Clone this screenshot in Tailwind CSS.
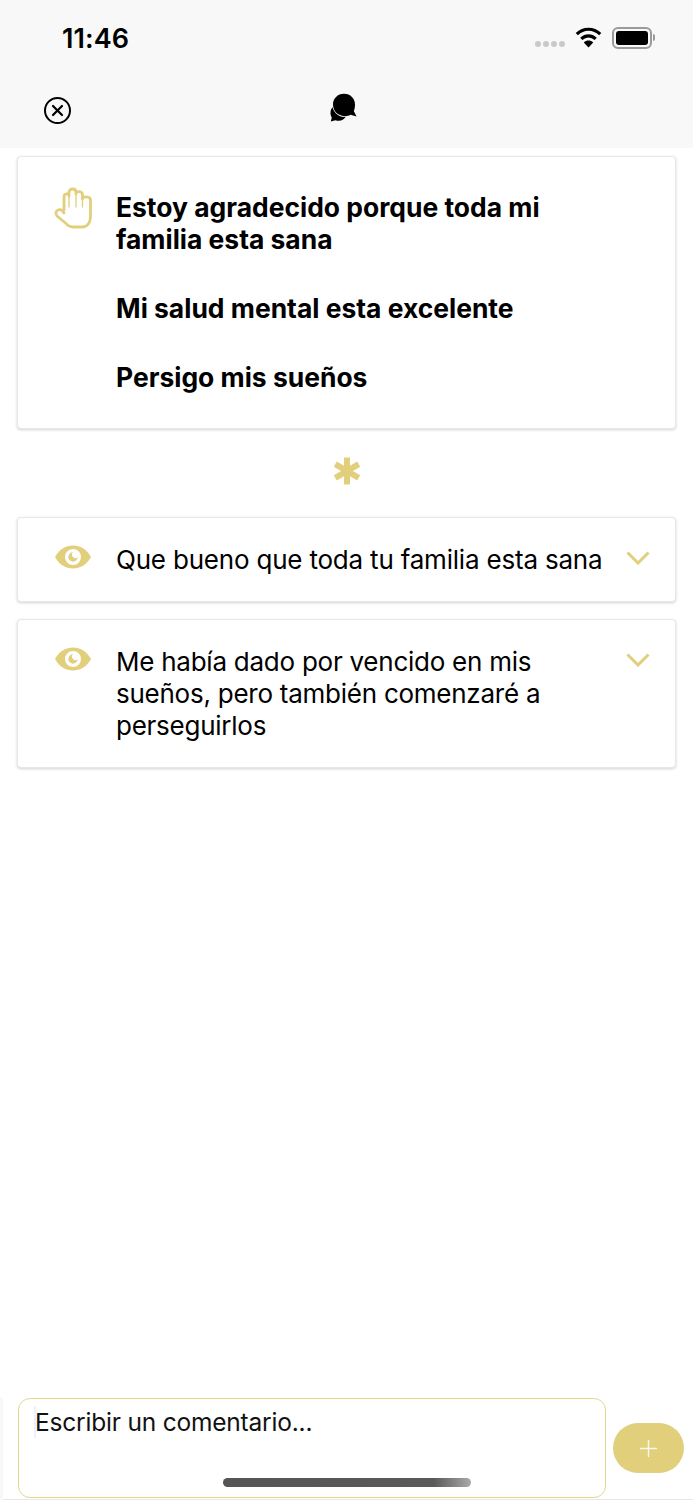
<!DOCTYPE html>
<html lang="es">
<head>
    <meta charset="UTF-8">
    <meta name="viewport" content="width=device-width, initial-scale=1.0">
    <title>Comentarios</title>
    <script src="https://cdn.jsdelivr.net/npm/@tailwindcss/browser@4"></script>
</head>
<body class="bg-white">
    <div class="relative w-[693px] h-[1500px] overflow-hidden flex flex-col font-['Inter',sans-serif] text-black">
        <!-- Header -->
        <header class="h-[148px] shrink-0 bg-[#f8f8f8] flex flex-col">
            <div class="h-[76px] pl-[62px] pr-[38px] flex items-center justify-between">
                <span class="text-[27px] font-semibold tracking-[0.1px] leading-none">11:46</span>
                <div class="flex items-center">
                    <div class="flex gap-[2px] mt-[12px] mr-[10px]">
                        <span class="w-[6px] h-[6px] rounded-full bg-[#c9c9c9]"></span>
                        <span class="w-[6px] h-[6px] rounded-full bg-[#c9c9c9]"></span>
                        <span class="w-[6px] h-[6px] rounded-full bg-[#c9c9c9]"></span>
                        <span class="w-[6px] h-[6px] rounded-full bg-[#c9c9c9]"></span>
                    </div>
                    <svg class="mr-[10px] -mt-[2px]" width="27" height="21" viewBox="0 0 27 21" fill="none">
                        <path d="M1.8 7.2C8.6 .6 18.4 .6 25.2 7.2" stroke="#000" stroke-width="3.2"/>
                        <path d="M6.3 11.8C10.6 7.8 16.400 7.8 20.7 11.8" stroke="#000" stroke-width="3.2"/>
                        <path d="M13.5 20.5L8.8 15.4C11.6 13 15.4 13 18.2 15.4Z" fill="#000"/>
                    </svg>
                    <div class="w-[40px] h-[22px] rounded-[6px] border-2 border-[#9a9a9a] p-[2px] -mt-[1px]">
                        <div class="w-full h-full rounded-[3px] bg-black"></div>
                    </div>
                    <span class="w-[2px] h-[7px] rounded-r-full bg-[#9a9a9a] ml-[1px] -mt-[1px]"></span>
                </div>
            </div>
            <div class="relative flex-1">
                <svg class="absolute left-[43px] top-[20px]" width="29" height="29" viewBox="0 0 29 29" fill="none" stroke="#000">
                    <circle cx="14.5" cy="14.5" r="12.5" stroke-width="2"/>
                    <path d="M10 10L19 19M19 10L10 19" stroke-width="2.2" stroke-linecap="round"/>
                </svg>
                <svg class="absolute left-[329px] top-[17px]" width="28" height="29" viewBox="0 0 28 29" fill="#000">
                    <path d="M9 12C4.500 12 1.500 15.500 1.500 20C1.500 21.800 2 23.300 2.800 24.500L1.800 28.500L6.500 27.300C11 28.800 15.500 27 17 23Z"/>
                    <path stroke="#f8f8f8" stroke-width="1.500" paint-order="stroke" d="M15 0.700C21.500 0.700 26 5.500 26 11.500C26 14.500 25.500 16.500 24.800 18L27.500 23.500L21.500 21.800C19.500 23 17.500 23.300 15.500 23.200C9 22.800 4 18 4 11.500C4 5.500 8.500 0.700 15 0.700Z"/>
                </svg>
            </div>
        </header>

        <!-- Content -->
        <main class="flex-1 px-[17px] pt-[8px] flex flex-col">
            <section class="h-[273px] bg-white rounded-[4px] border border-[#e8e8e8] shadow-[0_1px_3px_rgba(0,0,0,0.18)] pl-[36px] pr-[20px] pt-[30px] flex gap-[24px]">
                <svg class="shrink-0 w-[38px] h-[42px]" viewBox="0 0 38 42" fill="none" stroke="#e1cf7c" stroke-width="2.800" stroke-linecap="round" stroke-linejoin="round">
                    <path d="M10 23V10C10 6 15 6 15 9V5C15 1 22 1 22 5V7C22 3.500 28.500 4 28.500 8V12C28.500 9 36.500 9 36.500 13V29C36.500 36 33 40 28 40H19C16 40 14 39 12 36.500L3 29C1 26.500 2 24 4 23C6.500 22 8.500 23 10 26"/>
                    <path d="M15 8V20M22 6V20M28.500 9V20" stroke-width="1.300"/>
                </svg>
                <div class="text-[26.45px] leading-[32px] font-bold flex flex-col gap-[37px] pt-[4px]">
                    <p>Estoy agradecido porque toda mi<br>familia esta sana</p>
                    <p>Mi salud mental esta excelente</p>
                    <p>Persigo mis sueños</p>
                </div>
            </section>

            <div class="h-[88px] flex items-start justify-center pt-[28px]">
                <svg width="28" height="28" viewBox="0 0 28 28" fill="none" stroke="#e1cf7c" stroke-width="6">
                    <path d="M14 0.500V27.500M2.300 7.200L25.700 20.800M25.700 7.200L2.300 20.800"/>
                </svg>
            </div>

            <section class="h-[85px] bg-white rounded-[4px] border border-[#e8e8e8] shadow-[0_1px_3px_rgba(0,0,0,0.18)] pl-[37px] pr-[25px] pt-[25px] flex">
                <svg class="shrink-0 w-[36px] h-[24px] mt-[2px] mr-[25px]" viewBox="0 0 36 24">
                    <path fill="#e1cf7c" fill-rule="evenodd" d="M0 12C4.500 4 11 0.500 18 0.500S31.500 4 36 12C31.500 20 25 23.500 18 23.500S4.500 20 0 12ZM18 4A8 8 0 1 0 18 20A8 8 0 1 0 18 4Z"/>
                    <path fill="#e1cf7c" d="M18 7.300A4.700 4.700 0 1 0 22.700 12A2.600 2.600 0 0 1 18 7.300Z"/>
                </svg>
                <p class="flex-1 whitespace-nowrap text-[26px] tracking-[-0.2px] leading-[32px] pt-[1px]">Que bueno que toda tu familia esta sana</p>
                <svg class="shrink-0 w-[24px] h-[14px] mt-[8px]" viewBox="0 0 24 14" fill="none" stroke="#e1cf7c" stroke-width="3">
                    <path d="M1.500 1.500L12 12L22.500 1.500"/>
                </svg>
            </section>

            <section class="h-[149px] mt-[17px] bg-white rounded-[4px] border border-[#e8e8e8] shadow-[0_1px_3px_rgba(0,0,0,0.18)] pl-[37px] pr-[25px] pt-[25px] flex">
                <svg class="shrink-0 w-[36px] h-[24px] mt-[2px] mr-[25px]" viewBox="0 0 36 24">
                    <path fill="#e1cf7c" fill-rule="evenodd" d="M0 12C4.500 4 11 0.500 18 0.500S31.500 4 36 12C31.500 20 25 23.500 18 23.500S4.500 20 0 12ZM18 4A8 8 0 1 0 18 20A8 8 0 1 0 18 4Z"/>
                    <path fill="#e1cf7c" d="M18 7.300A4.700 4.700 0 1 0 22.700 12A2.600 2.600 0 0 1 18 7.300Z"/>
                </svg>
                <p class="flex-1 text-[26px] tracking-[-0.25px] leading-[32px] pt-[1px]">Me había dado por vencido en mis<br>sueños, pero también comenzaré a<br>perseguirlos</p>
                <svg class="shrink-0 w-[24px] h-[14px] mt-[8px]" viewBox="0 0 24 14" fill="none" stroke="#e1cf7c" stroke-width="3">
                    <path d="M1.500 1.500L12 12L22.500 1.500"/>
                </svg>
            </section>
        </main>

        <!-- Comment bar -->
        <footer class="h-[102px] shrink-0 pl-[18px] pr-[9px] flex items-start border-b border-[#e8e8e8]">
            <div class="relative w-[588px] h-[100px] rounded-[12px] border-[1.5px] border-[#e6d68d] bg-white pl-[16px] pt-[7px] text-[24.5px] tracking-[-0.2px] leading-[32px] text-[#111]">
                Escribir un comentario...
                <span class="absolute left-[15px] top-[7px] w-[2px] h-[32px] bg-[#eef0ff]"></span>
            </div>
            <button class="w-[71px] h-[50px] ml-[7px] mt-[25px] rounded-full bg-[#e1cf7c] flex items-center justify-center">
                <svg width="17" height="17" viewBox="0 0 17 17" stroke="#fff" stroke-width="1.500" opacity="0.85"><path d="M8.500 0V17M0 8.500H17"/></svg>
            </button>
        </footer>

        <!-- Left edge of the comment bar -->
        <div class="absolute left-0 top-[1398px] w-[3px] h-[102px] bg-[#f8f8f8]"></div>

        <!-- Home indicator -->
        <div class="absolute left-[223px] top-[1478px] w-[248px] h-[9px] rounded-full bg-gradient-to-r from-[#555] via-[#5a5a5a] via-85% to-[#aaa]"></div>
    </div>
</body>
</html>
